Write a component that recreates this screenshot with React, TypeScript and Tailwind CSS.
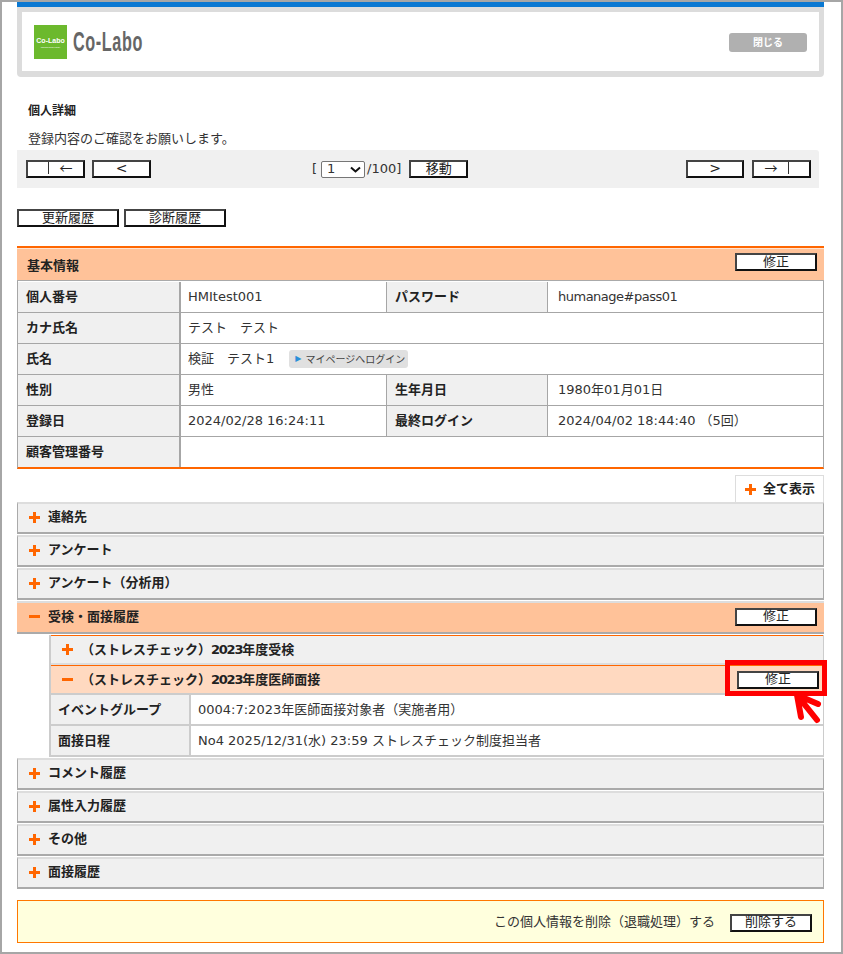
import type { ReactNode } from "react";

const font = "font-['DejaVu_Sans','Noto_Sans_CJK_JP',sans-serif]";

function Btn({ children, className = "" }: { children?: ReactNode; className?: string }) {
  return (
    <button
      className={`flex h-[18px] items-center justify-center border-2 border-t-[#444] border-l-[#444] border-r-[#111] border-b-[#111] bg-white pb-[2px] text-[13px] leading-none text-[#222] ${className}`}
    >
      {children}
    </button>
  );
}

function Plus({ open = false }: { open?: boolean }) {
  return (
    <svg width="11" height="11" viewBox="0 0 11 11" className="shrink-0">
      <rect x="0" y="4" width="11" height="3" fill="#ff6600" />
      {!open && <rect x="4" y="0" width="3" height="11" fill="#ff6600" />}
    </svg>
  );
}

function Row({ cells }: { cells: ReactNode[] }) {
  return (
    <div className="flex h-[31px] border-b-[1px] border-[#a6a6a6]">
      <div className="flex w-[163px] shrink-0 items-center border-r-2 border-[#a6a6a6] bg-[#f0f0f0] pl-[8px] text-[13px] font-bold text-[#222]">
        {cells[0]}
      </div>
      {cells.length === 2 ? (
        <div className="flex flex-1 items-center pl-[7px] text-[13px] text-[#333]">{cells[1]}</div>
      ) : (
        <>
          <div className="flex w-[205px] shrink-0 items-center pl-[7px] text-[13px] text-[#333]">{cells[1]}</div>
          <div className="flex w-[162px] shrink-0 items-center border-x border-[#a6a6a6] bg-[#f0f0f0] pl-[8px] text-[13px] font-bold text-[#222]">
            {cells[2]}
          </div>
          <div className="flex flex-1 items-center pl-[10px] text-[13px] text-[#333]">{cells[3]}</div>
        </>
      )}
    </div>
  );
}

function Section({ title }: { title: string }) {
  return (
    <div className="mb-[1px] flex h-[32px] items-center gap-[8px] border-x border-b-2 border-t-2 border-x-[#aaa] border-t-[#ddd] border-b-[#aaa] bg-[#f0f0f0] pb-[2px] pl-[11px] text-[13px] font-bold text-[#222]">
      <Plus />
      {title}
    </div>
  );
}

function SubRow({ label, value }: { label: string; value: string }) {
  return (
    <div className="flex h-[31px] border-b-2 border-[#ccc]">
      <div className="flex w-[140px] shrink-0 items-center border-r-2 border-[#ccc] bg-[#f0f0f0] pl-[7px] text-[13px] font-bold text-[#222]">
        {label}
      </div>
      <div className="flex flex-1 items-center pl-[7px] text-[13px] text-[#333]">{value}</div>
    </div>
  );
}

export default function App() {
  return (
    <div className={`${font} relative h-[954px] w-[843px] border-2 border-[#a6a6a6] bg-white pl-[15px] pr-[17px] text-[#222]`}>
      {/* header */}
      <div className="h-[5px] bg-[#0a78d2]" />
      <div className="flex h-[70px] rounded-b-[4px] border-x-[5px] border-t-[5px] border-b-[6px] border-[#dcdcdc] bg-white">
        <div className="flex flex-1 items-center pl-[12px] pr-[12px] pt-[1px]">
          <div className="flex h-[34px] w-[33px] flex-col items-center justify-center bg-[#6cb92d] text-white">
            <span className="font-['Liberation_Sans'] text-[7px] font-bold leading-none">Co-Labo</span>
            <span className="mt-[2px] font-['Liberation_Sans'] text-[2px] leading-none">Thinking Tools Library</span>
          </div>
          <span className="ml-[6px] origin-left scale-x-[0.6] font-['Liberation_Sans'] text-[27px] font-bold leading-none tracking-[1px] text-[#666]">
            Co-Labo
          </span>
          <div className="ml-auto flex h-[19px] w-[78px] items-center justify-center rounded-[3px] bg-[#b0b0b0] text-[10px] font-bold text-white">
            閉じる
          </div>
        </div>
      </div>

      <div className="mt-[24px] flex h-[20px] items-center pl-[11px] text-[12px] font-bold text-[#222]">個人詳細</div>
      <div className="mt-[8px] flex h-[20px] items-center pl-[11px] text-[13px] text-[#333]">登録内容のご確認をお願いします。</div>

      {/* pager */}
      <div className="mt-[1px] flex h-[38px] w-[802px] items-start rounded-tr-[3px] bg-[#f0f0f0] pl-[9px] pr-[8px] pt-[10px]">
        <Btn className="w-[59px] pb-0">
          <span className="h-full w-[21px] border-r border-[#333]" />
          <span className="flex-1 pb-[2px] text-center font-['Noto_Sans_CJK_JP']">←</span>
        </Btn>
        <Btn className="ml-[7px] w-[59px] text-[14px]">&lt;</Btn>
        <div className="ml-[161px] flex h-[18px] items-center text-[13px] text-[#333]">
          <span>[</span>
          <span className="ml-[4px] flex h-[17px] w-[44px] items-center justify-between rounded-[2px] border border-[#767676] bg-white pl-[5px] pr-[3px] text-[13px]">
            1
            <svg width="11" height="7" viewBox="0 0 11 7">
              <path d="M1 1.5 L5.5 5.5 L10 1.5" fill="none" stroke="#111" strokeWidth="2" />
            </svg>
          </span>
          <span className="ml-[2px]">/100]</span>
        </div>
        <Btn className="ml-[8px] w-[59px]">移動</Btn>
        <Btn className="ml-auto w-[58px] text-[14px]">&gt;</Btn>
        <Btn className="ml-[8px] w-[59px] pb-0">
          <span className="flex-1 pb-[2px] text-center font-['Noto_Sans_CJK_JP']">→</span>
          <span className="h-full w-[21px] border-l border-[#333]" />
        </Btn>
      </div>

      <div className="mt-[21px] flex gap-[5px]">
        <Btn className="w-[102px]">更新履歴</Btn>
        <Btn className="w-[102px]">診断履歴</Btn>
      </div>

      {/* basic info */}
      <div className="mt-[19px] border-t-2 border-[#ff6600]">
        <div className="flex h-[33px] items-start justify-between border-t border-b border-t-[#ffe3d0] border-b-[#aaa] bg-[#ffc299] pl-[10px] pr-[7px]">
          <span className="flex h-[33px] items-center text-[13px] font-bold text-[#222]">基本情報</span>
          <Btn className="mt-[4px] w-[82px]">修正</Btn>
        </div>
      </div>
      <div className="border-x border-b-2 border-x-[#a6a6a6] border-b-[#ff6600]">
        <div className="h-[1px]" />
        <Row cells={["個人番号", "HMItest001", "パスワード", <span className="tracking-[-0.5px]">humanage#pass01</span>]} />
        <Row cells={["カナ氏名", "テスト　テスト"]} />
        <Row
          cells={[
            "氏名",
            <span className="flex items-center">
              検証　テスト1
              <span className="ml-[15px] flex h-[18px] w-[119px] items-center rounded-[3px] bg-[#e0e0e0] pl-[6px] text-[10px] text-[#444]">
                <span className="mr-[4px] text-[8px] text-[#2a8fd8]">▶</span>マイページへログイン
              </span>
            </span>,
          ]}
        />
        <Row cells={["性別", "男性", "生年月日", "1980年01月01日"]} />
        <Row cells={["登録日", "2024/02/28 16:24:11", "最終ログイン", "2024/04/02 18:44:40 （5回）"]} />
        <div className="flex h-[30px]">
          <div className="flex w-[163px] shrink-0 items-center border-r-2 border-[#a6a6a6] bg-[#f0f0f0] pl-[8px] text-[13px] font-bold text-[#222]">
            顧客管理番号
          </div>
        </div>
      </div>

      <div className="mt-[6px] flex justify-end">
        <div className="flex h-[27px] w-[89px] items-center gap-[7px] border-x border-t border-[#ddd] pl-[9px] text-[13px] font-bold">
          <Plus />
          全て表示
        </div>
      </div>

      {/* accordion */}
      <Section title="連絡先" />
      <Section title="アンケート" />
      <Section title="アンケート（分析用）" />

      <div className="flex h-[33px] items-center justify-between border-b-2 border-t-2 border-t-[#ddd] border-b-[#aaa] bg-[#ffc299] pb-[2px] pl-[12px] pr-[7px]">
        <span className="flex items-center gap-[8px] text-[13px] font-bold text-[#222]">
          <Plus open />
          受検・面接履歴
        </span>
        <Btn className="w-[82px]">修正</Btn>
      </div>

      <div className="ml-[32px] mt-[1px] border-l-2 border-r border-[#ccc]">
        <div className="flex h-[30px] items-center border-t border-b-2 border-t-[#ff6600] border-b-[#ddd] bg-[#f0f0f0] pl-[11px] text-[13px] font-bold text-[#222]">
          <Plus />
          <span className="ml-[8px]">（ストレスチェック）<span className="tracking-[-1.25px]">2023</span>年度受検</span>
        </div>
        <div className="relative flex h-[30px] items-center justify-between border-t border-b-2 border-t-[#ff6600] border-b-[#ccc] bg-[#ffd9c0] pl-[11px] pr-[4px] text-[13px] font-bold text-[#222]">
          <span className="flex items-center">
            <Plus open />
            <span className="ml-[8px]">（ストレスチェック）<span className="tracking-[-1.25px]">2023</span>年度医師面接</span>
          </span>
          <Btn className="w-[82px] font-normal">修正</Btn>
        </div>
        <SubRow label="イベントグループ" value="0004:7:2023年医師面接対象者（実施者用）" />
        <SubRow label="面接日程" value="No4 2025/12/31(水) 23:59 ストレスチェック制度担当者" />
      </div>

      <div className="mt-[1px]">
        <Section title="コメント履歴" />
        <Section title="属性入力履歴" />
        <Section title="その他" />
        <Section title="面接履歴" />
      </div>

      <div className="mt-[11px] flex h-[43px] items-center justify-end border border-[#ff7700] bg-[#ffffdd] pr-[11px] text-[13px] text-[#333]">
        この個人情報を削除（退職処理）する
        <Btn className="ml-[15px] mt-[2px] w-[82px]">削除する</Btn>
      </div>

      {/* annotation */}
      <svg className="absolute left-[788px] top-[689px]" width="36" height="36" viewBox="0 0 36 36">
        <path
          d="M7 4 L27 29 M7 4 L28 13 M7 4 L11 26"
          fill="none"
          stroke="#ff0000"
          strokeWidth="6"
          strokeLinecap="round"
        />
      </svg>
      <div className="absolute left-[723px] top-[658px] h-[36px] w-[102px] border-[5px] border-[#ff0000]" />
    </div>
  );
}
